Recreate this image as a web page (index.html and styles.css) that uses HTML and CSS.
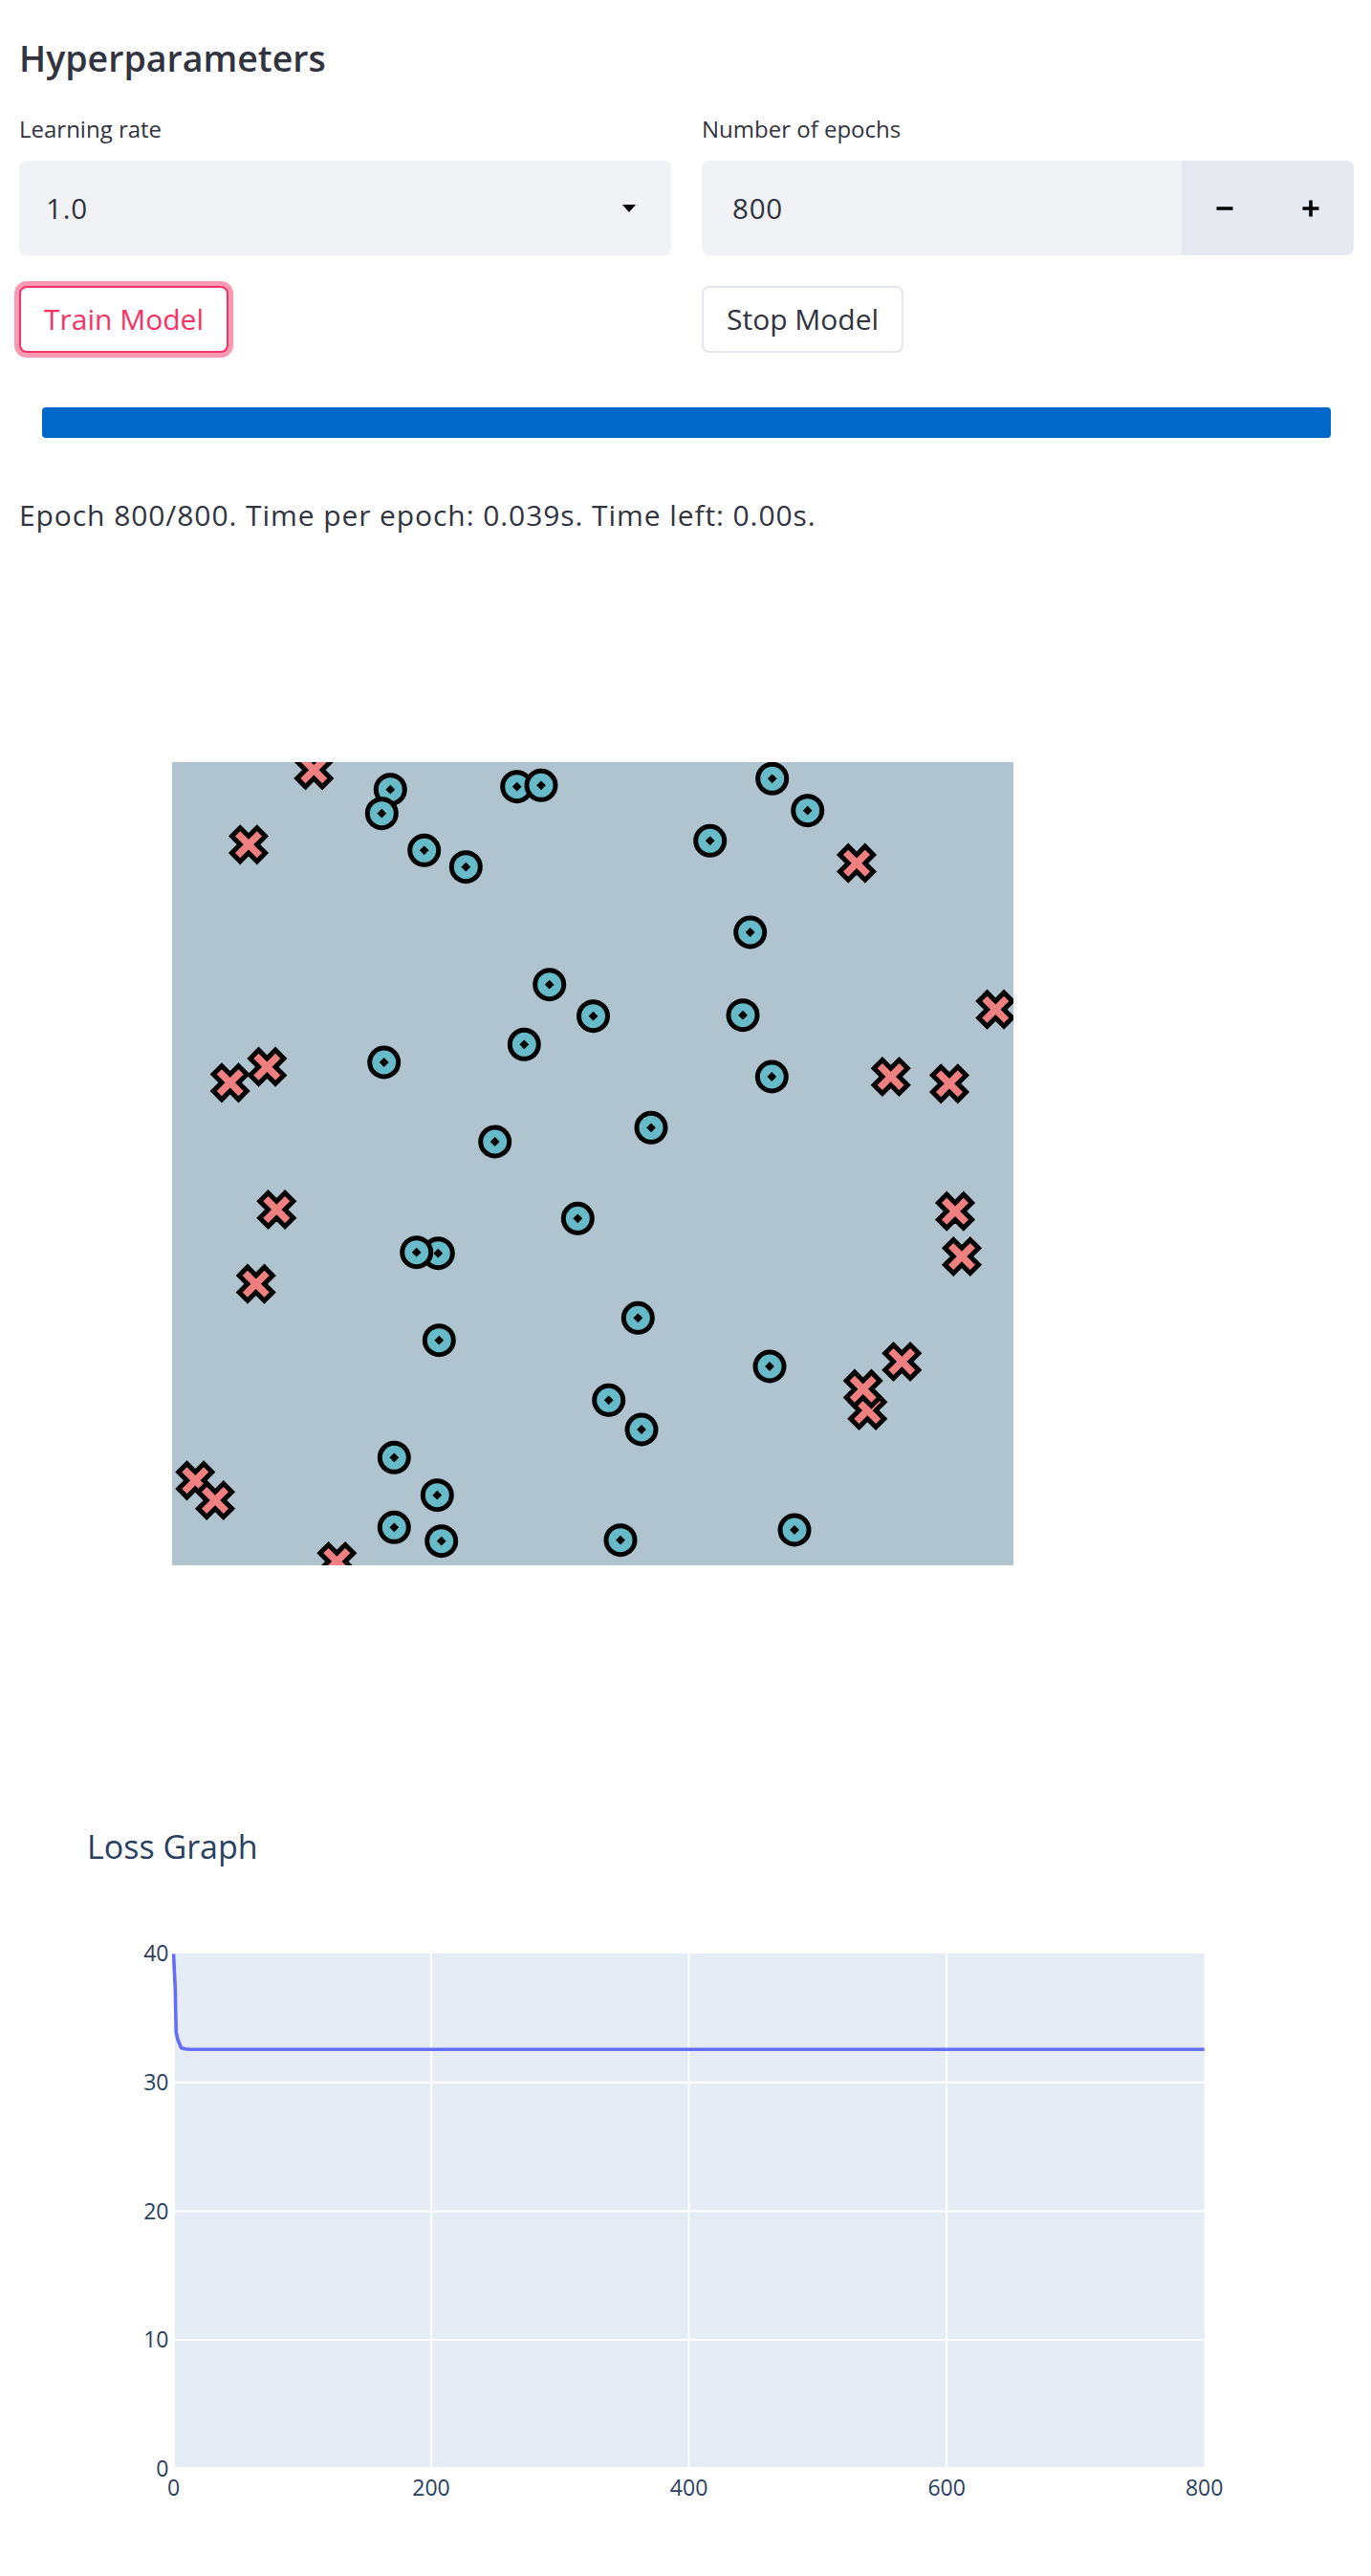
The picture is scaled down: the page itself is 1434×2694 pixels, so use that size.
FILE: index.html
```html
<!DOCTYPE html>
<html lang="en">
<head>
<meta charset="utf-8">
<title>Hyperparameters</title>
<link rel="stylesheet" href="styles.css">
</head>
<body>
<div class="main">
  <h3 class="title">Hyperparameters</h3>
  <div class="cols">
    <div class="col">
      <label class="lbl">Learning rate</label>
      <div class="select">
        <span class="val">1.0</span>
        <svg class="caret" width="14" height="8" viewBox="0 0 14 8"><path d="M0,0H14L7,8Z" fill="#000"/></svg>
      </div>
      <div class="btnrow"><button class="btn primary">Train Model</button></div>
    </div>
    <div class="col">
      <label class="lbl">Number of epochs</label>
      <div class="number">
        <span class="val num">800</span>
        <div class="step">
          <span class="sb"><svg width="18" height="18" viewBox="0 0 18 18"><path d="M0.5,9H17.5" stroke="#000" stroke-width="3.6"/></svg></span>
          <span class="sb"><svg width="18" height="18" viewBox="0 0 18 18"><path d="M0.5,9H17.5M9,0.5V17.5" stroke="#000" stroke-width="3.6"/></svg></span>
        </div>
      </div>
      <div class="btnrow"><button class="btn">Stop Model</button></div>
    </div>
  </div>
  <div class="progress"><div class="bar"></div></div>
  <p class="status">Epoch 800/800. Time per epoch: 0.039s. Time left: 0.00s.</p>

  <svg class="scatter" width="880" height="840" viewBox="180 797 880 840">
    <defs>
      <g id="cd">
        <path d="M15,0A15,15 0 1,1 0,-15A15,15 0 0,1 15,0Z"/>
        <path class="dot" d="M0,-4.9L4.9,0L0,4.9L-4.9,0Z"/>
      </g>
      <path id="xx" d="M0,8.77l8.77,8.77l8.77,-8.77l-8.77,-8.77l8.77,-8.77l-8.77,-8.77l-8.77,8.77l-8.77,-8.77l-8.77,8.77l8.77,8.77l-8.77,8.77l8.77,8.77Z"/>
    </defs>
    <rect x="180" y="797" width="880" height="840" class="pbg"/>
    <g class="circ">
      <use href="#cd" x="408.3" y="825.7"/>
      <use href="#cd" x="399.3" y="850.7"/>
      <use href="#cd" x="540.7" y="822.7"/>
      <use href="#cd" x="566" y="821.3"/>
      <use href="#cd" x="443.7" y="889.3"/>
      <use href="#cd" x="487.3" y="906.7"/>
      <use href="#cd" x="574.7" y="1029.7"/>
      <use href="#cd" x="620.5" y="1062.7"/>
      <use href="#cd" x="548.3" y="1092.3"/>
      <use href="#cd" x="401.7" y="1111"/>
      <use href="#cd" x="517.7" y="1194"/>
      <use href="#cd" x="807.7" y="814.3"/>
      <use href="#cd" x="844.7" y="847.7"/>
      <use href="#cd" x="742.7" y="879.3"/>
      <use href="#cd" x="784.7" y="975"/>
      <use href="#cd" x="777" y="1061.7"/>
      <use href="#cd" x="807.3" y="1126"/>
      <use href="#cd" x="681" y="1179.3"/>
      <use href="#cd" x="604.3" y="1274.3"/>
      <use href="#cd" x="458.3" y="1310.7"/>
      <use href="#cd" x="435.7" y="1309.7"/>
      <use href="#cd" x="459.3" y="1401.7"/>
      <use href="#cd" x="636.7" y="1464.3"/>
      <use href="#cd" x="412.3" y="1524.3"/>
      <use href="#cd" x="457.3" y="1563.7"/>
      <use href="#cd" x="412.3" y="1597.3"/>
      <use href="#cd" x="461.7" y="1611.7"/>
      <use href="#cd" x="667.3" y="1378.3"/>
      <use href="#cd" x="805" y="1429"/>
      <use href="#cd" x="671" y="1495"/>
      <use href="#cd" x="649" y="1610.7"/>
      <use href="#cd" x="831" y="1600"/>
    </g>
    <g class="cross">
      <use href="#xx" x="328.3" y="805.3"/>
      <use href="#xx" x="260" y="883.3"/>
      <use href="#xx" x="279.3" y="1115.7"/>
      <use href="#xx" x="240.7" y="1132.3"/>
      <use href="#xx" x="896" y="902.7"/>
      <use href="#xx" x="1041.3" y="1055.7"/>
      <use href="#xx" x="931.7" y="1126"/>
      <use href="#xx" x="993" y="1133.3"/>
      <use href="#xx" x="289.3" y="1265"/>
      <use href="#xx" x="267.7" y="1342.7"/>
      <use href="#xx" x="204.3" y="1548.3"/>
      <use href="#xx" x="225" y="1569"/>
      <use href="#xx" x="352.3" y="1633"/>
      <use href="#xx" x="999" y="1266.7"/>
      <use href="#xx" x="1006" y="1314"/>
      <use href="#xx" x="943.3" y="1424"/>
      <use href="#xx" x="907.3" y="1475"/>
      <use href="#xx" x="902.7" y="1452.7"/>
    </g>
  </svg>

  <svg class="loss" width="1260" height="790" viewBox="60 1880 1260 790">
    <text class="ltitle" x="91" y="1943.5">Loss Graph</text>
    <rect class="lbg" x="181.5" y="2043" width="1078.2" height="538.5"/>
    <g class="grid">
      <path d="M451.05,2043V2581.5M720.6,2043V2581.5M990.15,2043V2581.5"/>
      <path d="M181.5,2447.1H1259.7M181.5,2312.5H1259.7M181.5,2177.8H1259.7"/>
    </g>
    <g class="zero">
      <path d="M181.5,2581.5H1259.7M181.5,2043V2581.5"/>
    </g>
    <path class="lline" d="M181.5,2043.3L183.3,2080L184.2,2125L186,2133.3L189.6,2141.7L193.5,2142.8L198.6,2143.3L1259.7,2143.3"/>
    <g class="yt">
      <text x="176.5" y="2589.5">0</text>
      <text x="176.5" y="2455.1">10</text>
      <text x="176.5" y="2320.5">20</text>
      <text x="176.5" y="2185.8">30</text>
      <text x="176.5" y="2051">40</text>
    </g>
    <g class="xt">
      <text x="181.5" y="2609.5">0</text>
      <text x="451.05" y="2609.5">200</text>
      <text x="720.6" y="2609.5">400</text>
      <text x="990.15" y="2609.5">600</text>
      <text x="1259.7" y="2609.5">800</text>
    </g>
  </svg>
</div>
</body>
</html>
```

FILE: styles.css
```css
html, body {
  margin: 0;
  padding: 0;
  background: #ffffff;
}

body {
  font-family: "Open Sans", "Noto Sans", sans-serif;
  color: #31333f;
}

.main {
  padding: 36px 18px 24px 20px;
}

.title {
  margin: 0;
  font-size: 37.5px;
  line-height: 50px;
  font-weight: 600;
  color: #31333f;
}

.cols {
  display: grid;
  grid-template-columns: 1fr 1fr;
  column-gap: 32px;
  margin-top: 32px;
}

.col {
  display: flex;
  flex-direction: column;
}

.lbl {
  display: block;
  font-size: 24px;
  line-height: 34px;
  height: 34px;
  margin-bottom: 16px;
  color: #31333f;
}

.select,
.number {
  height: 99px;
  border-radius: 8px;
  background: #f0f2f6;
  display: flex;
  align-items: center;
  font-size: 29.5px;
  letter-spacing: 0.8px;
  color: #31333f;
}

.select {
  padding-left: 28px;
  padding-right: 37px;
  justify-content: space-between;
}

.caret {
  display: block;
}

.number {
  overflow: hidden;
}

.val.num {
  flex: 1;
  padding-left: 32px;
}

.step {
  display: flex;
  align-self: stretch;
  background: #e6e9ef;
}

.sb {
  width: 90px;
  display: flex;
  align-items: center;
  justify-content: center;
}

.sb svg {
  display: block;
}

.btnrow {
  display: flex;
  margin-top: 32px;
}

.btn {
  font-family: "Open Sans", "Noto Sans", sans-serif;
  font-size: 30px;
  height: 70px;
  padding: 0 24px;
  border: 2px solid #e3e6ec;
  border-radius: 8px;
  background: #ffffff;
  color: #31333f;
  line-height: 1;
}

.btn.primary {
  border-color: #f63366;
  color: #f63366;
  box-shadow: 0 0 0 5px rgba(246, 51, 102, 0.5);
}

.progress {
  margin: 57px 24px 0 24px;
  height: 32px;
}

.bar {
  height: 100%;
  width: 100%;
  background: #0068c9;
  border-radius: 4px;
}

.status {
  margin: 60px 0 0 0;
  font-size: 30px;
  line-height: 42px;
  letter-spacing: 0.92px;
  color: #31333f;
}

.scatter {
  display: block;
  margin: 237px 0 0 160px;
  overflow: hidden;
}

.pbg {
  fill: #b0c4cf;
}

.circ use {
  fill: #67bbc8;
  stroke: #000;
  stroke-width: 5;
}

.dot {
  fill: #000;
  stroke: none;
}

.cross use {
  fill: #f08080;
  stroke: #000;
  stroke-width: 5;
}

.loss {
  display: block;
  margin: 243px 0 0 40px;
  font-family: "Open Sans", "Noto Sans", sans-serif;
}

.ltitle {
  font-size: 34px;
  fill: #2a3f5f;
}

.lbg {
  fill: #e5ecf6;
}

.grid path {
  stroke: #ffffff;
  stroke-width: 2;
  fill: none;
}

.zero path {
  stroke: #ffffff;
  stroke-width: 3;
  fill: none;
}

.lline {
  fill: none;
  stroke: #636efa;
  stroke-width: 3.6;
  stroke-linejoin: round;
}

.yt text {
  font-size: 23px;
  fill: #2a3f5f;
  text-anchor: end;
}

.xt text {
  font-size: 23px;
  fill: #2a3f5f;
  text-anchor: middle;
}
```
